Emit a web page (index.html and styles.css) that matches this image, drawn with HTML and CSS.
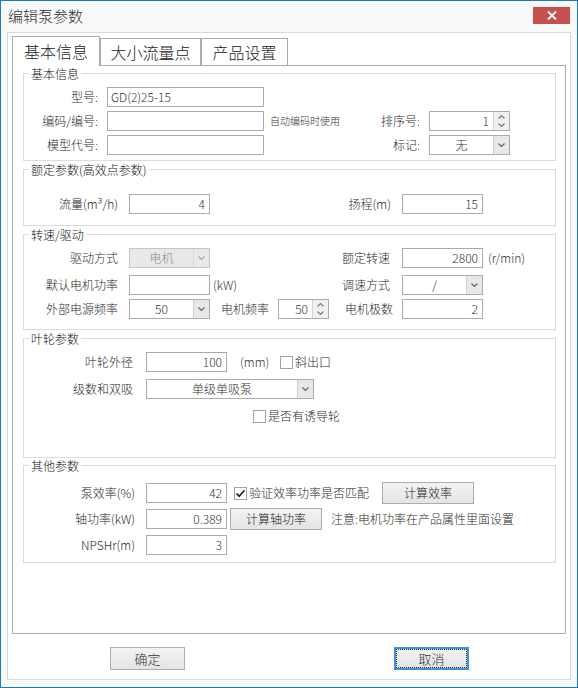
FILE: index.html
```html
<!DOCTYPE html>
<html lang="zh-CN">
<head>
<meta charset="utf-8">
<title>编辑泵参数</title>
<link rel="stylesheet" href="styles.css">
</head>
<body>
<div class="window">
  <div class="titlebar">
    <span class="title">编辑泵参数</span>
    <div class="close">
      <svg width="10" height="9" viewBox="0 0 10 9"><path d="M1 0.5 L9 8.5 M9 0.5 L1 8.5" stroke="#fff" stroke-width="1.8" fill="none"/></svg>
    </div>
  </div>
  <div class="panel">
    <div class="tabs">
      <div class="tab active tw1">基本信息</div>
      <div class="tab tw2">大小流量点</div>
      <div class="tab tw3">产品设置</div>
    </div>
    <div class="page">
      <!-- 基本信息 -->
      <div class="group g1">
        <div class="legend">基本信息</div>
        <div class="row mt6">
          <div class="lbl w83">型号:</div>
          <div class="tb w157 left">GD(2)25-15</div>
        </div>
        <div class="row mt4">
          <div class="lbl w83">编码/编号:</div>
          <div class="tb w157"></div>
          <div class="note">自动编码时使用</div>
          <div class="lbl w63">排序号:</div>
          <div class="spin w81"><span class="val">1</span><span class="arrows"><svg width="7" height="4" viewBox="0 0 7 4"><path d="M0.5 3.5 L3.5 0.5 L6.5 3.5" fill="none" stroke="#777" stroke-width="1.1"/></svg><svg width="7" height="4" viewBox="0 0 7 4"><path d="M0.5 0.5 L3.5 3.5 L6.5 0.5" fill="none" stroke="#777" stroke-width="1.1"/></svg></span></div>
        </div>
        <div class="row mt4">
          <div class="lbl w83">模型代号:</div>
          <div class="tb w157"></div>
          <div class="spacer102"></div>
          <div class="lbl w63">标记:</div>
          <div class="combo w81"><span class="val">无</span><span class="drop"><svg width="7" height="4" viewBox="0 0 7 4"><path d="M0.5 0.5 L3.5 3.5 L6.5 0.5" fill="none" stroke="#666" stroke-width="1.2"/></svg></span></div>
        </div>
      </div>

      <!-- 额定参数 -->
      <div class="group g2">
        <div class="legend">额定参数(高效点参数)</div>
        <div class="row mt17">
          <div class="lbl w105">流量(m³/h)</div>
          <div class="tb w81">4</div>
          <div class="lbl w192">扬程(m)</div>
          <div class="tb w81">15</div>
        </div>
      </div>

      <!-- 转速/驱动 -->
      <div class="group g3">
        <div class="legend">转速/驱动</div>
        <div class="row mt6">
          <div class="lbl w105">驱动方式</div>
          <div class="combo disabled w81"><span class="val">电机</span><span class="drop"><svg width="7" height="4" viewBox="0 0 7 4"><path d="M0.5 0.5 L3.5 3.5 L6.5 0.5" fill="none" stroke="#aaa" stroke-width="1.2"/></svg></span></div>
          <div class="lbl w192 pr12">额定转速</div>
          <div class="tb w81">2800</div>
          <div class="unit ml5">(r/min)</div>
        </div>
        <div class="row mt7">
          <div class="lbl w105">默认电机功率</div>
          <div class="tb w81"></div>
          <div class="mid w192">
            <span class="unit">(kW)</span>
            <span class="midlbl">调速方式</span>
          </div>
          <div class="combo w81"><span class="val">/</span><span class="drop"><svg width="7" height="4" viewBox="0 0 7 4"><path d="M0.5 0.5 L3.5 3.5 L6.5 0.5" fill="none" stroke="#666" stroke-width="1.2"/></svg></span></div>
        </div>
        <div class="row mt4">
          <div class="lbl w105">外部电源频率</div>
          <div class="combo w81"><span class="val">50</span><span class="drop"><svg width="7" height="4" viewBox="0 0 7 4"><path d="M0.5 0.5 L3.5 3.5 L6.5 0.5" fill="none" stroke="#666" stroke-width="1.2"/></svg></span></div>
          <div class="mid w192 pl11">
            <span class="flbl">电机频率</span>
            <div class="spin w51"><span class="val">50</span><span class="arrows"><svg width="7" height="4" viewBox="0 0 7 4"><path d="M0.5 3.5 L3.5 0.5 L6.5 3.5" fill="none" stroke="#777" stroke-width="1.1"/></svg><svg width="7" height="4" viewBox="0 0 7 4"><path d="M0.5 0.5 L3.5 3.5 L6.5 0.5" fill="none" stroke="#777" stroke-width="1.1"/></svg></span></div>
            <span class="midlbl pr9">电机极数</span>
          </div>
          <div class="tb w81">2</div>
        </div>
      </div>

      <!-- 叶轮参数 -->
      <div class="group g4">
        <div class="legend">叶轮参数</div>
        <div class="row mt6">
          <div class="lbl w122 pr13">叶轮外径</div>
          <div class="tb w81">100</div>
          <div class="unit w40 ml13">(mm)</div>
          <span class="cb"></span>
          <span class="cbtext">斜出口</span>
        </div>
        <div class="row mt7">
          <div class="lbl w122 pr13">级数和双吸</div>
          <div class="combo w168"><span class="val">单级单吸泵</span><span class="drop"><svg width="7" height="4" viewBox="0 0 7 4"><path d="M0.5 0.5 L3.5 3.5 L6.5 0.5" fill="none" stroke="#666" stroke-width="1.2"/></svg></span></div>
        </div>
        <div class="row mt7">
          <span class="cb ml229"></span>
          <span class="cbtext">是否有诱导轮</span>
        </div>
      </div>

      <!-- 其他参数 -->
      <div class="group g5">
        <div class="legend">其他参数</div>
        <div class="row h22 mt9">
          <div class="lbl w122">泵效率(%)</div>
          <div class="tb w81">42</div>
          <div class="cbwrap">
            <span class="cb checked"><svg width="11" height="11" viewBox="0 0 11 11"><path d="M1.5 5.5 L4.2 8.2 L9.5 2.2" fill="none" stroke="#222" stroke-width="1.7"/></svg></span>
            <span class="cbtext">验证效率功率是否匹配</span>
          </div>
          <div class="btn w92">计算效率</div>
        </div>
        <div class="row h22 mt4">
          <div class="lbl w122">轴功率(kW)</div>
          <div class="tb w81">0.389</div>
          <div class="btn w92 ml3">计算轴功率</div>
          <div class="notice">注意:电机功率在产品属性里面设置</div>
        </div>
        <div class="row mt5">
          <div class="lbl w122">NPSHr(m)</div>
          <div class="tb w81">3</div>
        </div>
      </div>
    </div>
    <div class="buttons">
      <div class="btn big">确定</div>
      <div class="btn big focus">取消</div>
    </div>
  </div>
</div>
</body>
</html>
```

FILE: styles.css
```css
html, body {
  margin: 0;
  padding: 0;
  background: #f9f9f9;
}
body {
  font-family: "Noto Sans CJK SC", "Microsoft YaHei", sans-serif;
  font-size: 12px;
  font-weight: 300;
  color: #2a2a2a;
}
.window {
  width: 578px;
  height: 688px;
  box-sizing: border-box;
  border: 1px solid #1979ca;
  background: #f9f9f9;
}
.titlebar {
  height: 31px;
  display: flex;
  align-items: flex-start;
  justify-content: space-between;
}
.title {
  font-size: 15px;
  line-height: 20px;
  margin: 5px 0 0 7px;
  color: #333;
}
.close {
  width: 37px;
  height: 17px;
  margin: 6px 7px 0 0;
  background: #c75050;
  display: flex;
  align-items: center;
  justify-content: center;
}
.close svg { display: block; }

.panel {
  margin-left: 6px;
  width: 564px;
  box-sizing: border-box;
  border: 1px solid #d9d9d9;
  background: #fff;
  padding-bottom: 9px;
}
.tabs {
  display: flex;
  align-items: flex-start;
  height: 33px;
  padding-left: 4px;
}
.tab {
  box-sizing: border-box;
  border: 1px solid #acacac;
  border-bottom: none;
  background: #fff;
  font-size: 16px;
  text-align: center;
  margin-top: 5px;
  height: 27px;
  line-height: 27px;
  color: #222;
}
.tab.active {
  margin-top: 3px;
  height: 30px;
  line-height: 28px;
  position: relative;
  z-index: 1;
}
.tw1 { width: 88px; }
.tw2 { width: 101px; }
.tw3 { width: 87px; }

.page {
  margin: -1px 4px 0 4px;
  height: 569px;
  box-sizing: border-box;
  border: 1px solid #acacac;
  background: #fff;
  padding-left: 10px;
  overflow: hidden;
}
.group {
  width: 533px;
  box-sizing: border-box;
  border: 1px solid #dcdcdc;
}
.g1 { margin-top: 7px; padding-bottom: 5px; }
.g2 { margin-top: 8px; padding-bottom: 11px; }
.g3 { margin-top: 8px; padding-bottom: 10px; }
.g4 { margin-top: 8px; padding-bottom: 31px; }
.g5 { margin-top: 7px; padding-bottom: 7px; }

.legend {
  display: block;
  width: fit-content;
  margin: -8px 0 0 5px;
  padding: 0 2px;
  height: 15px;
  line-height: 15px;
  background: #fff;
  color: #111;
}
.row {
  display: flex;
  align-items: center;
  height: 20px;
  line-height: 18px;
}
.row.h22 { height: 22px; }
.mt4 { margin-top: 4px; }
.mt5 { margin-top: 5px; }
.mt6 { margin-top: 6px; }
.mt7 { margin-top: 7px; }
.mt9 { margin-top: 9px; }
.mt17 { margin-top: 17px; }

.lbl {
  flex: none;
  box-sizing: border-box;
  text-align: right;
  white-space: nowrap;
}
.w83 { width: 83px; padding-right: 9px; }
.w63 { width: 63px; padding-right: 9px; }
.w105 { width: 105px; padding-right: 11px; }
.w192 { width: 192px; padding-right: 11px; }
.w122 { width: 122px; padding-right: 11px; }
.pr12 { padding-right: 12px; }
.pr13 { padding-right: 13px; }
.pr9 { padding-right: 9px; }

.tb {
  flex: none;
  box-sizing: border-box;
  height: 20px;
  border: 1px solid #ababab;
  background: #fff;
  text-align: right;
  padding: 0 4px 0 3px;
  line-height: 18px;
  color: #333;
  white-space: nowrap;
}
.tb.left { text-align: left; }
.w157 { width: 157px; }
.w81 { width: 81px; }
.w51 { width: 51px; }
.w168 { width: 168px; }
.w92 { width: 92px; }
.w40 { width: 40px; }

.note {
  flex: none;
  box-sizing: border-box;
  width: 102px;
  padding-left: 6px;
  font-size: 10px;
  color: #333;
  white-space: nowrap;
}
.spacer102 { flex: none; width: 102px; }

.spin {
  flex: none;
  box-sizing: border-box;
  height: 20px;
  border: 1px solid #ababab;
  background: #fff;
  display: flex;
  color: #333;
}
.spin .val {
  flex: 1;
  text-align: right;
  padding-right: 4px;
  line-height: 18px;
}
.spin .arrows {
  width: 15px;
  background: #f0f0f0;
  border-left: 1px solid #d6d6d6;
  display: flex;
  flex-direction: column;
  align-items: center;
  justify-content: space-evenly;
}
.spin svg, .combo svg { display: block; }

.combo {
  flex: none;
  box-sizing: border-box;
  height: 20px;
  border: 1px solid #ababab;
  background: #fff;
  display: flex;
  color: #333;
}
.combo .val {
  flex: 1;
  text-align: center;
  line-height: 18px;
}
.combo .drop {
  width: 15px;
  background: #e8e8e8;
  border-left: 1px solid #d2d2d2;
  display: flex;
  align-items: center;
  justify-content: center;
}
.combo.disabled {
  background: #e9e9e9;
  border-color: #c4c4c4;
  color: #8a8a8a;
}
.combo.disabled .drop {
  background: #e9e9e9;
  border-left-color: #d8d8d8;
}

.unit {
  flex: none;
  color: #333;
  white-space: nowrap;
}
.ml5 { margin-left: 5px; }
.ml13 { margin-left: 13px; }
.ml3 { margin-left: 3px; }
.ml229 { margin-left: 229px; }

.mid {
  flex: none;
  box-sizing: border-box;
  display: flex;
  align-items: center;
  padding-left: 3px;
  padding-right: 0;
}
.mid.pl11 { padding-left: 11px; }
.mid .midlbl {
  margin-left: auto;
  padding-right: 12px;
  white-space: nowrap;
}
.mid .midlbl.pr9 { padding-right: 9px; }
.mid .flbl {
  margin-right: 9px;
  white-space: nowrap;
}

.cb {
  flex: none;
  box-sizing: border-box;
  width: 13px;
  height: 13px;
  border: 1px solid #a3a3a3;
  background: #fff;
  display: flex;
  align-items: center;
  justify-content: center;
}
.cb svg { display: block; }
.cbtext {
  margin-left: 2px;
  white-space: nowrap;
}
.cbwrap {
  flex: none;
  box-sizing: border-box;
  width: 155px;
  padding-left: 7px;
  display: flex;
  align-items: center;
}

.btn {
  flex: none;
  box-sizing: border-box;
  height: 22px;
  border: 1px solid #adadad;
  background: linear-gradient(#f3f3f3, #e4e4e4);
  text-align: center;
  line-height: 20px;
  color: #222;
  white-space: nowrap;
}
.notice {
  margin-left: 9px;
  white-space: nowrap;
}

.buttons {
  display: flex;
  margin-top: 13px;
  padding-left: 102px;
}
.btn.big {
  width: 75px;
  height: 23px;
  line-height: 21px;
  font-size: 13px;
  color: #333;
}
.btn.big.focus {
  margin-left: 209px;
  border: 2px solid #3c94e4;
  line-height: 19px;
  outline: 1px dotted #222;
  outline-offset: -3px;
}
```
